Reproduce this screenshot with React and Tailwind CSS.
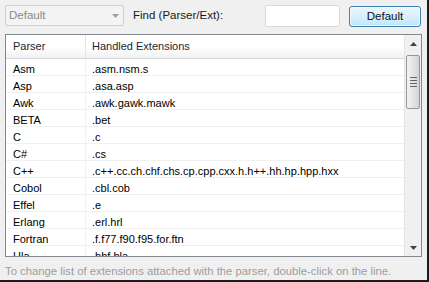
import React from 'react';

const rows = [
  ['Asm', '.asm.nsm.s'],
  ['Asp', '.asa.asp'],
  ['Awk', '.awk.gawk.mawk'],
  ['BETA', '.bet'],
  ['C', '.c'],
  ['C#', '.cs'],
  ['C++', '.c++.cc.ch.chf.chs.cp.cpp.cxx.h.h++.hh.hp.hpp.hxx'],
  ['Cobol', '.cbl.cob'],
  ['Effel', '.e'],
  ['Erlang', '.erl.hrl'],
  ['Fortran', '.f.f77.f90.f95.for.ftn'],
  ['Hla', '.hhf.hla'],
];

// small triangle glyph for combo / scrollbar arrows
function Arrow({ up, color = '#404040' }) {
  return (
    <svg width="7" height="4" viewBox="0 0 7 4">
      <path d={up ? 'M0 4 L3.5 0 L7 4 Z' : 'M0 0 L7 0 L3.5 4 Z'} fill={color} />
    </svg>
  );
}

export default function App() {
  return (
    <div
      className="w-[429px] h-[282px] bg-[#f0f0f0] border-r-2 border-b-2 border-[#1c1c1c] flex flex-col text-[11px] text-black overflow-hidden"
      style={{ fontFamily: '"Liberation Sans", Arial, sans-serif' }}
    >
      {/* Top toolbar */}
      <div className="flex items-start pt-[5px] pl-[5px] h-[27px] shrink-0">
        <div className="w-[119px] h-[21px] border border-[#cfcfcf] bg-[#f4f4f4] flex items-center justify-between pl-[3px] pr-[4px] rounded-[2px]">
          <span className="text-[#8a8a8a] text-[11.5px]">Default</span>
          <div className="flex items-center h-full pl-[2px]">
            <Arrow color="#a0a0a0" />
          </div>
        </div>
        <div className="ml-[9px] h-[21px] flex items-center text-[#1a1a1a] text-[11.5px]">Find (Parser/Ext):</div>
        <div className="ml-auto w-[75px] h-[22px] bg-white border border-[#d8d8d8] rounded-[2px]" />
        <button className="ml-[9px] mr-[6px] mt-[1px] w-[72px] h-[21px] rounded-[3px] border border-[#3c7fb1] bg-gradient-to-b from-[#eaf6fd] via-[#d9f0fc] to-[#bee6fd] shadow-[inset_0_0_0_1px_rgba(255,255,255,0.7)] text-[11.5px] text-[#111] flex items-center justify-center">
          Default
        </button>
      </div>

      {/* List view */}
      <div className="mt-[7px] ml-[5px] mr-[5px] h-[223px] shrink-0 border border-[#828790] bg-white flex overflow-hidden">
        <div className="flex-1 flex flex-col overflow-hidden">
          <div className="h-[24px] shrink-0 flex bg-gradient-to-b from-white via-white to-[#f1f2f4] border-b border-[#d5d5d5] text-[#1e1e2e]">
            <div className="w-[80px] pl-[7px] flex items-center border-r border-[#e3e5e8]">Parser</div>
            <div className="flex-1 pl-[6px] flex items-center">Handled Extensions</div>
          </div>
          {rows.map(([name, ext]) => (
            <div key={name} className="h-[17px] shrink-0 flex border-b border-[#f0f0f0]">
              <div className="w-[80px] pl-[7px] pt-[4px] flex items-center border-r border-[#f0f0f0]">{name}</div>
              <div className="flex-1 pl-[6px] pt-[4px] flex items-center whitespace-nowrap">{ext}</div>
            </div>
          ))}
        </div>
        {/* Scrollbar */}
        <div className="w-[17px] shrink-0 bg-[#f0f0f0] border-l border-[#e6e6e6] flex flex-col items-center">
          <div className="h-[17px] w-full flex items-center justify-center">
            <Arrow up />
          </div>
          <div className="mt-[3px] w-[14px] h-[54px] rounded-[2px] border border-[#979797] bg-gradient-to-r from-[#f4f4f4] via-[#e4e4e4] to-[#d4d4d4] flex flex-col items-center justify-center gap-[2px]">
            <div className="w-[7px] h-px bg-[#666]" />
            <div className="w-[7px] h-px bg-[#666]" />
            <div className="w-[7px] h-px bg-[#666]" />
            <div className="w-[7px] h-px bg-[#666]" />
          </div>
          <div className="flex-1" />
          <div className="h-[17px] w-full flex items-center justify-center">
            <Arrow />
          </div>
        </div>
      </div>

      {/* Footer hint */}
      <div className="ml-[5px] mt-[6px] text-[#9d9d9d] text-[11.3px] whitespace-nowrap">
        To change list of extensions attached with the parser, double-click on the line.
      </div>
    </div>
  );
}
